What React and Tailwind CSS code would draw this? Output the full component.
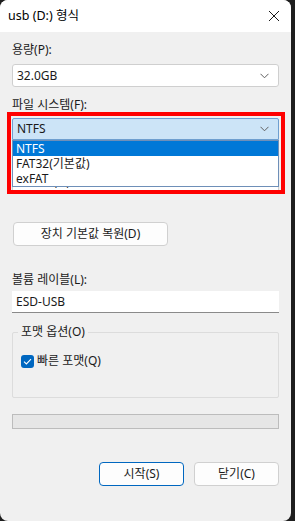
import React from "react";

const font = { fontFamily: '"Noto Sans", "Noto Sans CJK KR", sans-serif' };

function Chevron() {
  return (
    <svg width="9" height="6" viewBox="0 0 9 6" className="absolute right-[9px] top-1/2 -translate-y-1/2">
      <path d="M0.5 0.8 L4.5 4.8 L8.5 0.8" fill="none" stroke="#5f5f5f" strokeWidth="1" />
    </svg>
  );
}

export default function App() {
  return (
    <div className="w-[295px] h-[521px] bg-[#1e1e1e] overflow-hidden font-['Noto_Sans','Noto_Sans_CJK_KR',sans-serif] text-[12px] text-[#1a1a1a]">
      <div className="relative w-[291px] h-[521px] rounded-[8px] bg-[#f0f0f0] overflow-hidden">
        {/* title bar */}
        <div className="h-[32px] bg-white flex items-center justify-between pl-[8px] pr-[11px]">
          <span className="text-[12.5px] leading-none text-black">usb (D:) 형식</span>
          <svg width="12" height="12" viewBox="0 0 12 12">
            <path d="M1 1 L11 11 M11 1 L1 11" stroke="#1a1a1a" strokeWidth="1" />
          </svg>
        </div>

        <div className="px-[12px] pt-[10px] flex flex-col">
          <div className="h-[16px] leading-[16px]">용량(P):</div>
          <div className="relative mt-[6px] h-[23px] bg-white border border-[#cfcfcf] rounded-[3px] flex items-center pl-[4px]">
            32.0GB
            <Chevron />
          </div>

          <div className="mt-[10px] h-[16px] leading-[16px]">파일 시스템(F):</div>
          <div className="relative mt-[5px] h-[22px] bg-[#cce4f7] border border-[#6e9fd0] rounded-t-[2px] flex items-center pl-[4px]">
            NTFS
            <Chevron />
          </div>

          <div className="mt-[10px] h-[16px] leading-[16px]">할당 단위 크기(A):</div>
          <div className="relative mt-[5px] h-[23px] bg-white border border-[#cfcfcf] rounded-[3px] flex items-center pl-[4px]">
            4096 바이트
            <Chevron />
          </div>

          <div className="mt-[28px] w-[155px] h-[24px] ml-[1px] bg-[#fdfdfd] border border-[#d0d0d0] rounded-[4px] flex items-center justify-center">
            장치 기본값 복원(D)
          </div>

          <div className="mt-[26px] h-[16px] leading-[16px]">볼륨 레이블(L):</div>
          <div className="mt-[3px] h-[22px] bg-white border-b border-[#8a8a8a] flex items-center pl-[4px]">
            ESD-USB
          </div>

          <div className="relative mt-[19px] h-[66px] border border-[#dcdcdc] rounded-[2px]">
            <div className="absolute -top-[9px] left-[5px] px-[3px] bg-[#f0f0f0] leading-[16px]">포맷 옵션(O)</div>
            <div className="absolute top-[20px] left-[8px] flex items-center gap-[3px]">
              <div className="w-[13px] h-[13px] rounded-[3px] bg-[#0067c0] flex items-center justify-center">
                <svg width="9" height="7" viewBox="0 0 9 7">
                  <path d="M1 3.6 L3.4 6 L8 1.2" fill="none" stroke="white" strokeWidth="1.1" />
                </svg>
              </div>
              <span className="leading-[16px]">빠른 포맷(Q)</span>
            </div>
          </div>

          <div className="mt-[16px] h-[15px] bg-[#e6e6e6] border border-[#bcbcbc]" />

          <div className="mt-[33px] flex justify-end gap-[10px]">
            <div className="w-[85px] h-[24px] bg-[#fdfdfd] border border-[#0067c0] rounded-[4px] flex items-center justify-center">
              시작(S)
            </div>
            <div className="w-[85px] h-[24px] bg-[#fdfdfd] border border-[#d0d0d0] rounded-[4px] flex items-center justify-center">
              닫기(C)
            </div>
          </div>
        </div>

        {/* dropdown list overlay */}
        <div className="absolute left-[12px] top-[140px] w-[267px] h-[47px] bg-white border border-[#6e8fb8] flex flex-col">
          <div className="h-[15px] bg-[#0078d7] text-white leading-[15px] pl-[3px]">NTFS</div>
          <div className="h-[15px] leading-[15px] pl-[3px]">FAT32(기본값)</div>
          <div className="h-[15px] leading-[15px] pl-[3px]">exFAT</div>
        </div>

        {/* red highlight overlay */}
        <div className="absolute left-[7px] top-[112px] w-[278px] h-[82px] border-[4px] border-[#ff0000] pointer-events-none" />
      </div>
    </div>
  );
}
